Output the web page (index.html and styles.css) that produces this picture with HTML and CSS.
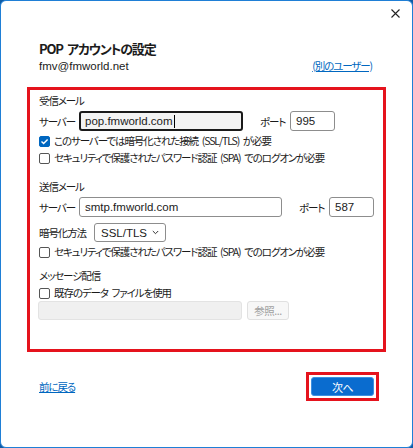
FILE: index.html
```html
<!DOCTYPE html>
<html lang="ja">
<head>
    <meta charset="UTF-8">
    <meta name="viewport" content="width=device-width, initial-scale=1.0">
    <title>POP アカウントの設定</title>
    <link rel="stylesheet" href="styles.css">
</head>
<body>
    <div class="window">
        <div class="titlebar">
            <button class="close" aria-label="閉じる">
                <svg width="9" height="9" viewBox="0 0 9 9">
                    <path d="M0.5 0.5 L8.5 8.5 M8.5 0.5 L0.5 8.5" stroke="#222" stroke-width="1.1" fill="none"/>
                </svg>
            </button>
        </div>
        <div class="content">
            <h1>POP アカウントの設定</h1>
            <div class="account">
                <span class="latin">fmv@fmworld.net</span>
                <a href="#" class="link">(別のユーザー)</a>
            </div>

            <div class="settings">
                <div class="heading">受信メール</div>
                <div class="row">
                    <label class="label">サーバー</label>
                    <div class="field focused server-in">pop.fmworld.com<span class="caret"></span></div>
                    <label class="port-label">ポート</label>
                    <div class="field port">995</div>
                </div>
                <div class="check-row first">
                    <span class="box checked">
                        <svg width="9" height="9" viewBox="0 0 9 9"><path d="M1.5 4.6 L3.6 6.6 L7.6 2.4" stroke="#fff" stroke-width="1.4" fill="none"/></svg>
                    </span>
                    このサーバーでは暗号化された接続 (SSL/TLS) が必要
                </div>
                <div class="check-row">
                    <span class="box"></span>
                    セキュリティで保護されたパスワード認証 (SPA) でのログオンが必要
                </div>

                <div class="heading section">送信メール</div>
                <div class="row">
                    <label class="label">サーバー</label>
                    <div class="field server-out">smtp.fmworld.com</div>
                    <label class="port-label">ポート</label>
                    <div class="field port">587</div>
                </div>
                <div class="row enc">
                    <label class="enc-label">暗号化方法</label>
                    <div class="field select">
                        SSL/TLS
                        <svg width="7" height="5" viewBox="0 0 7 5"><path d="M0.8 1 L3.5 3.7 L6.2 1" stroke="#333" stroke-width="1" fill="none"/></svg>
                    </div>
                </div>
                <div class="check-row first">
                    <span class="box"></span>
                    セキュリティで保護されたパスワード認証 (SPA) でのログオンが必要
                </div>

                <div class="heading delivery">メッセージ配信</div>
                <div class="check-row tight">
                    <span class="box"></span>
                    既存のデータ ファイルを使用
                </div>
                <div class="row file-row">
                    <div class="field disabled file-path"></div>
                    <button class="browse" disabled>参照...</button>
                </div>
            </div>
        </div>

        <div class="footer">
            <a href="#" class="link">前に戻る</a>
            <div class="next-wrap">
                <button class="next">次へ</button>
            </div>
        </div>
    </div>
</body>
</html>
```

FILE: styles.css
```css
html, body {
    margin: 0;
    padding: 0;
    background: #0f5ca6;
}
body {
    font-family: "Noto Sans CJK JP", "Noto Sans", sans-serif;
    font-feature-settings: "palt";
    font-size: 10.5px;
    letter-spacing: -1.1px;
    word-spacing: 2.5px;
    color: #1b1b1b;
}
.window {
    box-sizing: border-box;
    width: 413px;
    height: 448px;
    background: #fff;
    border: 1px solid #1f7fd6;
    border-radius: 6px;
    display: flex;
    flex-direction: column;
}
.titlebar {
    height: 24px;
    display: flex;
    justify-content: flex-end;
}
.close {
    border: none;
    background: none;
    padding: 0;
    width: 28px;
    height: 24px;
    margin-right: 3px;
    display: flex;
    align-items: center;
    justify-content: center;
}
.content {
    padding: 0 26px;
}
h1 {
    font-size: 13px;
    font-weight: bold;
    line-height: 18px;
    letter-spacing: -1.2px;
    margin: 15px 0 0 12px;
}
.account {
    display: flex;
    justify-content: space-between;
    align-items: center;
    line-height: 16px;
    margin: 0 14px 0 12px;
}
.latin {
    font-family: "Liberation Sans", sans-serif;
    font-size: 11.5px;
    letter-spacing: 0;
}
.link {
    color: #0067c0;
    text-decoration: underline;
}
.settings {
    margin-top: 13px;
    border: 3px solid #e5131d;
    padding: 3px 10px 29px 9px;
}
.heading {
    line-height: 16px;
}
.heading.section {
    margin-top: 13px;
}
.heading.delivery {
    margin-top: 8px;
}
.row {
    display: flex;
    align-items: center;
    margin-top: 2px;
    white-space: nowrap;
}
.label {
    width: 40px;
    flex-shrink: 0;
}
.field {
    box-sizing: border-box;
    height: 20px;
    border: 1px solid #8d8d8d;
    border-radius: 3px;
    padding: 0 5px;
    display: flex;
    align-items: center;
    background: #fff;
    flex-shrink: 0;
    font-family: "Liberation Sans", sans-serif;
    font-size: 11.5px;
    letter-spacing: 0;
    word-spacing: 0;
}
.field.focused {
    border: 2px solid #1a1a1a;
    background: #f3f3f3;
    padding: 0 4px;
}
.caret {
    width: 1px;
    height: 13px;
    background: #000;
    margin-left: 1px;
}
.server-in {
    width: 164px;
}
.server-out {
    width: 203px;
}
.port-label {
    margin-left: 17px;
    width: 30px;
    flex-shrink: 0;
}
.port {
    width: 45px;
}
.enc {
    margin-top: 6px;
}
.enc-label {
    width: 55px;
    flex-shrink: 0;
}
.select {
    width: 72px;
    height: 19px;
    justify-content: space-between;
    padding: 0 6px;
}
.check-row {
    display: flex;
    align-items: center;
    line-height: 16px;
    margin-top: 1px;
    white-space: nowrap;
}
.check-row.first {
    margin-top: 2px;
}
.check-row.tight {
    margin-top: 1px;
}
.box {
    box-sizing: border-box;
    flex-shrink: 0;
    width: 11px;
    height: 11px;
    border: 1px solid #555;
    border-radius: 2px;
    margin-right: 4px;
    display: flex;
    align-items: center;
    justify-content: center;
}
.box.checked {
    background: #0067c0;
    border-color: #0067c0;
}
.file-row {
    margin-top: 0;
}
.file-path {
    width: 204px;
    height: 19px;
    margin-left: -1px;
}
.field.disabled {
    background: #f0f0f0;
    border-color: #e3e3e3;
}
.browse {
    box-sizing: border-box;
    width: 42px;
    height: 19px;
    margin-left: 5px;
    border: 1px solid #e0e0e0;
    border-radius: 3px;
    background: #f7f7f7;
    color: #a0a0a0;
    font-family: inherit;
    font-size: 10.5px;
    letter-spacing: -0.5px;
    padding: 0;
}
.footer {
    display: flex;
    justify-content: space-between;
    align-items: center;
    margin: 20px 33px 0 38px;
}
.next-wrap {
    border: 3px solid #e5131d;
    padding: 2px;
}
.next {
    box-sizing: border-box;
    width: 63px;
    height: 19px;
    border: 1px solid #3d8fe0;
    border-radius: 3px;
    background: #0a6ccf;
    color: #fff;
    font-family: inherit;
    font-size: 11px;
    letter-spacing: -0.5px;
    padding: 0;
    display: block;
}
```
